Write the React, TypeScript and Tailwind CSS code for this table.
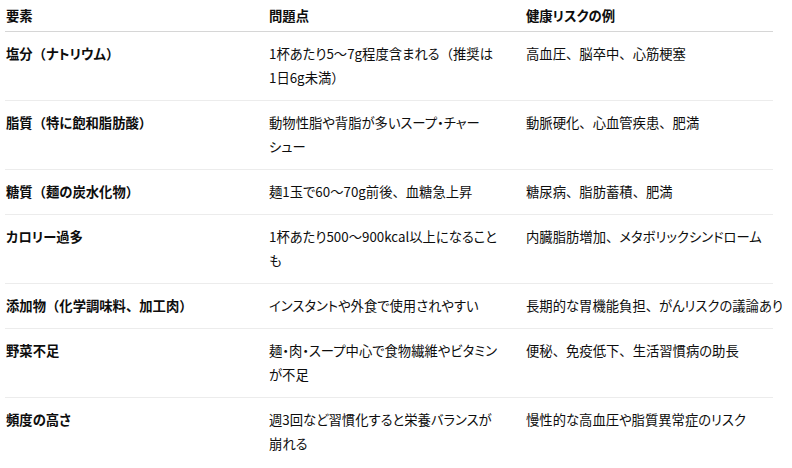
import React from "react";

function fx(s: string): React.ReactNode[] {
  const out: React.ReactNode[] = [];
  let buf = "";
  let k = 0;
  for (const ch of s) {
    if (ch === "（" || ch === "）" || ch === "、") {
      if (buf) out.push(buf);
      buf = "";
      out.push(
        <span key={k++} className="[font-feature-settings:normal]">
          {ch}
        </span>
      );
    } else if (ch === "\n") {
      if (buf) out.push(buf);
      buf = "";
      out.push(<br key={k++} />);
    } else {
      buf += ch;
    }
  }
  if (buf) out.push(buf);
  return out;
}

const rows: { a: string; b: string; c: string }[] = [
  { a: "塩分（ナトリウム）", b: "1杯あたり5〜7g程度含まれる（推奨は\n1日6g未満）", c: "高血圧、脳卒中、心筋梗塞" },
  { a: "脂質（特に飽和脂肪酸）", b: "動物性脂や背脂が多いスープ・チャー\nシュー", c: "動脈硬化、心血管疾患、肥満" },
  { a: "糖質（麺の炭水化物）", b: "麺1玉で60〜70g前後、血糖急上昇", c: "糖尿病、脂肪蓄積、肥満" },
  { a: "カロリー過多", b: "1杯あたり500〜900kcal以上になること\nも", c: "内臓脂肪増加、メタボリックシンドローム" },
  { a: "添加物（化学調味料、加工肉）", b: "インスタントや外食で使用されやすい", c: "長期的な胃機能負担、がんリスクの議論あり" },
  { a: "野菜不足", b: "麺・肉・スープ中心で食物繊維やビタミン\nが不足", c: "便秘、免疫低下、生活習慣病の助長" },
  { a: "頻度の高さ", b: "週3回など習慣化すると栄養バランスが\n崩れる", c: "慢性的な高血圧や脂質異常症のリスク" },
];

export default function App() {
  return (
    <div className="w-[792px] h-[468px] overflow-hidden bg-white text-[#0d0d0d] font-['Noto_Sans_CJK_JP','Noto_Sans',sans-serif] text-[13.33px] leading-6 [font-feature-settings:'palt']">
      <div className="ml-[5px] w-[768px]">
        <div className="grid grid-cols-[264px_257px_247px] border-b border-[#d6d6d6] pt-[4px] pb-[3px] font-bold">
          <div className="pl-[1px]">要素</div>
          <div>問題点</div>
          <div>健康リスクの例</div>
        </div>
        {rows.map((r, i) => (
          <div
            key={i}
            className={
              "grid grid-cols-[264px_257px_247px] py-[10px] " +
              (i < rows.length - 1 ? "border-b border-[#ececec]" : "")
            }
          >
            <div className="pl-[1px] font-bold whitespace-nowrap">{fx(r.a)}</div>
            <div className="whitespace-nowrap">{fx(r.b)}</div>
            <div className="whitespace-nowrap">{fx(r.c)}</div>
          </div>
        ))}
      </div>
    </div>
  );
}
